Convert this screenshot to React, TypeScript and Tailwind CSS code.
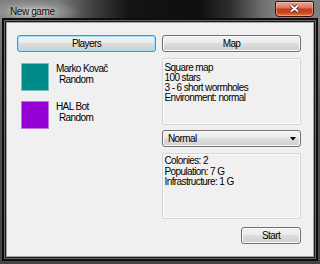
const btnBase =
  "flex items-center rounded-[3px] border bg-[linear-gradient(180deg,#f2f2f2_0%,#ebebeb_45%,#dddddd_50%,#cfcfcf_100%)] text-black leading-[10px]";
const btn = `${btnBase} justify-center border-[#707070] shadow-[inset_0_0_0_1px_#fcfcfc]`;

const box = "rounded-[2px] border border-[#d5d5d5] shadow-[inset_0_0_0_1px_#fbfbfb] bg-[#f0f0f0]";

function Player({ name, color }: { name: string; color: string }) {
  return (
    <div className="flex items-start gap-[7px]">
      <div className={`h-[28px] w-[28px] shrink-0 border border-white/45 ${color}`} />
      <div className="pt-[1px] leading-[10.5px]">
        <div>{name}</div>
        <div className="pl-[3px]">Random</div>
      </div>
    </div>
  );
}

export default function App() {
  return (
    <div className="flex h-[264px] w-[320px] flex-col overflow-hidden font-['Liberation_Sans',Arial,sans-serif] text-[10px] tracking-[-0.6px] text-black">
      {/* title bar */}
      <div className="flex h-[23px] shrink-0 items-start justify-between bg-[radial-gradient(ellipse_48px_13px_at_33px_12px,#c2c2c2_0%,rgba(160,160,160,0.6)_55%,transparent_100%),linear-gradient(90deg,#808080_0%,#7a7a7a_18%,#3c3c3c_30%,#141414_40%,#0e0e0e_62%,#2e2e2e_72%,#707070_82%,#8c8c8c_90%,#7e7e7e_100%)]">
        <span className="pl-[10px] pt-[7px] leading-[10px] tracking-[-0.4px] text-[#101010] [text-shadow:0_0_4px_#e6e6e6]">
          New game
        </span>
        <div className="mr-[6px] mt-[1px] flex h-[16px] w-[39px] items-center justify-center rounded-b-[4px] rounded-t-[2px] border border-[#3b120a] bg-[linear-gradient(180deg,#eaa998_0%,#da7662_40%,#c13a20_52%,#c9461f_75%,#dc7a4c_100%)] pb-[2px] shadow-[inset_0_0_0_1px_rgba(255,210,190,0.45)]">
          <svg width="11" height="9" viewBox="0 0 11 9">
            <path d="M2 1.5 L9 7.5 M9 1.5 L2 7.5" stroke="#4a1a10" strokeWidth="3.6" />
            <path d="M2 1.5 L9 7.5 M9 1.5 L2 7.5" stroke="#ffffff" strokeWidth="1.9" />
          </svg>
        </div>
      </div>

      {/* frame + client */}
      <div className="flex flex-1 bg-[linear-gradient(180deg,#7c7c7c_0%,#555555_35%,#444444_100%)] px-[7px] pb-[8px]">
        <div className="flex flex-1 gap-[6px] bg-[#f0f0f0] pl-[10px] pr-[12px] pt-[12px] shadow-[0_0_0_1px_#a8a8a8,0_0_0_2px_#151515,0_0_0_3px_#6a6a6a,0_0_0_5px_#0e0e0e]">
          {/* left column */}
          <div className="flex w-[139px] flex-col">
            <div className={`${btnBase} h-[17px] justify-center border-[#2f9ad8] shadow-[inset_0_0_0_1px_#9fe3fb]`}>
              Players
            </div>
            <div className="mt-[11px] flex flex-col gap-[10px] pl-[4px]">
              <Player name="Marko Kovač" color="bg-[#008b8b]" />
              <Player name="HAL Bot" color="bg-[#9400d3]" />
            </div>
          </div>

          {/* right column */}
          <div className="flex w-[139px] flex-col">
            <div className={`${btn} h-[17px]`}>Map</div>
            <div className={`${box} mt-[6px] h-[67px] pl-[1.5px] pt-[4px] leading-[10px]`}>
              <div>Square map</div>
              <div>100 stars</div>
              <div>3 - 6 short wormholes</div>
              <div>Environment: normal</div>
            </div>
            <div className={`${btnBase} mt-[5px] h-[17px] justify-between border-[#707070] pl-[5px] pr-[4px] shadow-[inset_0_0_0_1px_#fcfcfc]`}>
              <span>Normal</span>
              <svg width="6" height="4" viewBox="0 0 6 4">
                <path d="M0 0 H6 L3 3.5 Z" fill="#000" />
              </svg>
            </div>
            <div className={`${box} mt-[6px] h-[66px] pl-[1.5px] pt-[2px] leading-[10.5px]`}>
              <div>Colonies: 2</div>
              <div>Population: 7 G</div>
              <div>Infrastructure: 1 G</div>
            </div>
            <div className={`${btn} mt-[8px] h-[17px] w-[60px] self-end`}>Start</div>
          </div>
        </div>
      </div>
    </div>
  );
}
